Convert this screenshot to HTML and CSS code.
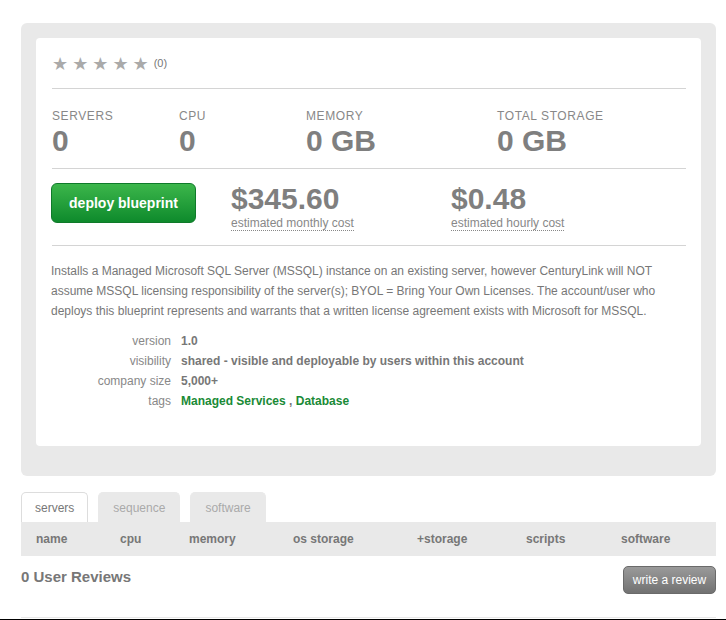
FILE: index.html
```html
<!DOCTYPE html>
<html>
<head>
<meta charset="utf-8">
<link rel="stylesheet" href="styles.css">
</head>
<body>
<div class="page">
  <div class="panel">
    <div class="card">
      <div class="rating">
        <span class="stars">★★★★★</span>
        <span class="count">(0)</span>
      </div>
      <div class="stats">
        <div class="stat s1"><div class="stat-label">SERVERS</div><div class="stat-value">0</div></div>
        <div class="stat s2"><div class="stat-label">CPU</div><div class="stat-value">0</div></div>
        <div class="stat s3"><div class="stat-label">MEMORY</div><div class="stat-value">0 GB</div></div>
        <div class="stat s4"><div class="stat-label">TOTAL STORAGE</div><div class="stat-value">0 GB</div></div>
      </div>
      <div class="costs">
        <button class="deploy">deploy blueprint</button>
        <div class="cost c1"><div class="cost-value">$345.60</div><span class="cost-label">estimated monthly cost</span></div>
        <div class="cost c2"><div class="cost-value">$0.48</div><span class="cost-label">estimated hourly cost</span></div>
      </div>
      <p class="desc">Installs a Managed Microsoft SQL Server (MSSQL) instance on an existing server, however CenturyLink will NOT assume MSSQL licensing responsibility of the server(s); BYOL = Bring Your Own Licenses. The account/user who deploys this blueprint represents and warrants that a written license agreement exists with Microsoft for MSSQL.</p>
      <dl class="meta">
        <dt>version</dt><dd>1.0</dd>
        <dt>visibility</dt><dd>shared - visible and deployable by users within this account</dd>
        <dt>company size</dt><dd>5,000+</dd>
        <dt>tags</dt><dd><a class="tag">Managed Services</a> , <a class="tag">Database</a></dd>
      </dl>
    </div>
  </div>
  <div class="tabs">
    <div class="tab active">servers</div>
    <div class="tab">sequence</div>
    <div class="tab">software</div>
  </div>
  <div class="thead">
    <div>name</div><div>cpu</div><div>memory</div><div>os storage</div><div>+storage</div><div>scripts</div><div>software</div>
  </div>
  <div class="reviews">
    <h3>0 User Reviews</h3>
    <button class="write">write a review</button>
  </div>
  <div class="rule"></div>
</div>
<div class="bottom-bar"></div>
</body>
</html>
```
FILE: styles.css
```css
html, body {
  margin: 0;
  padding: 0;
  background: #fff;
  font-family: "Liberation Sans", Arial, sans-serif;
  color: #777;
}
.page {
  padding: 23px 10px 0 21px;
}
.panel {
  background: #e9e9e9;
  border-radius: 6px;
  padding: 15px 15px 30px;
}
.card {
  background: #fff;
  border-radius: 4px;
  padding: 14px 15px 35px 16px;
}
.rating {
  display: flex;
  align-items: center;
  height: 22px;
  padding-bottom: 14px;
  border-bottom: 1px solid #d4d4d4;
}
.stars {
  color: #aaa;
  font-family: "DejaVu Sans", sans-serif;
  font-size: 18px;
  letter-spacing: 4px;
}
.count {
  font-size: 11px;
  color: #777;
  margin-left: 1px;
}
.stats {
  display: grid;
  grid-template-columns: 127px 127px 191px 1fr;
  padding: 20px 0 10px;
  border-bottom: 1px solid #d4d4d4;
}
.stat-label {
  font-size: 12px;
  letter-spacing: 0.6px;
  color: #888;
  line-height: 15px;
}
.stat-value {
  font-size: 30px;
  font-weight: bold;
  color: #7f7f7f;
  line-height: 34px;
}
.costs {
  display: flex;
  align-items: flex-start;
  padding: 14px 0 14px;
  border-bottom: 1px solid #d4d4d4;
}
.deploy {
  width: 145px;
  height: 40px;
  margin-left: -1px;
  border: 1px solid #0f7a2a;
  border-radius: 6px;
  background: linear-gradient(#3cb64b, #0e8a2c);
  color: #fff;
  font-family: "Liberation Sans", Arial, sans-serif;
  font-weight: bold;
  font-size: 14px;
  padding: 0;
}
.cost {
  display: flex;
  flex-direction: column;
  align-items: flex-start;
  padding-top: 1px;
}
.cost.c1 {
  margin-left: 35px;
  width: 220px;
}
.cost-value {
  font-size: 30px;
  font-weight: bold;
  color: #7f7f7f;
  line-height: 30px;
}
.cost-label {
  margin-top: 2px;
  font-size: 12px;
  color: #888;
  border-bottom: 1px dotted #888;
  line-height: 14px;
}
.desc {
  margin: 15px 0 0 -1px;
  font-size: 12px;
  line-height: 20px;
  color: #777;
}
.meta {
  display: grid;
  grid-template-columns: 119px 1fr;
  column-gap: 10px;
  margin: 10px 0 0;
  font-size: 12px;
  line-height: 20px;
}
.meta dt {
  text-align: right;
  color: #888;
}
.meta dd {
  margin: 0;
  font-weight: bold;
  color: #777;
}
.tag {
  color: #1a8a36;
}
.tabs {
  display: flex;
  gap: 10px;
  margin-top: 16px;
  height: 30px;
}
.tab {
  background: #e9e9e9;
  color: #aaa;
  font-size: 12px;
  padding: 0 14px;
  line-height: 30px;
  border-radius: 5px 5px 0 0;
  border: 1px solid #e9e9e9;
  border-bottom: none;
}
.tab.active {
  background: #fff;
  color: #777;
  border-color: #ddd;
  padding: 0 13px;
}
.thead {
  display: grid;
  grid-template-columns: 84px 69px 104px 124px 109px 95px 1fr;
  background: #e9e9e9;
  height: 34px;
  align-items: center;
  font-size: 12px;
  font-weight: bold;
  color: #777;
}
.thead div {
  padding-left: 15px;
}
.reviews {
  display: flex;
  justify-content: space-between;
  align-items: flex-start;
  padding-top: 10px;
  height: 51px;
}
.reviews h3 {
  margin: 2px 0 0;
  font-size: 15px;
  font-weight: bold;
  color: #777;
}
.write {
  width: 93px;
  height: 28px;
  border: 1px solid #6a6a6a;
  border-radius: 5px;
  background: linear-gradient(#9a9a9a, #727272);
  color: #fff;
  font-family: "Liberation Sans", Arial, sans-serif;
  font-size: 12px;
  padding: 0;
}
.rule {
  border-top: 1px solid #e8e8e8;
  height: 1px;
}
.bottom-bar {
  height: 3px;
  background: #000;
}
```
